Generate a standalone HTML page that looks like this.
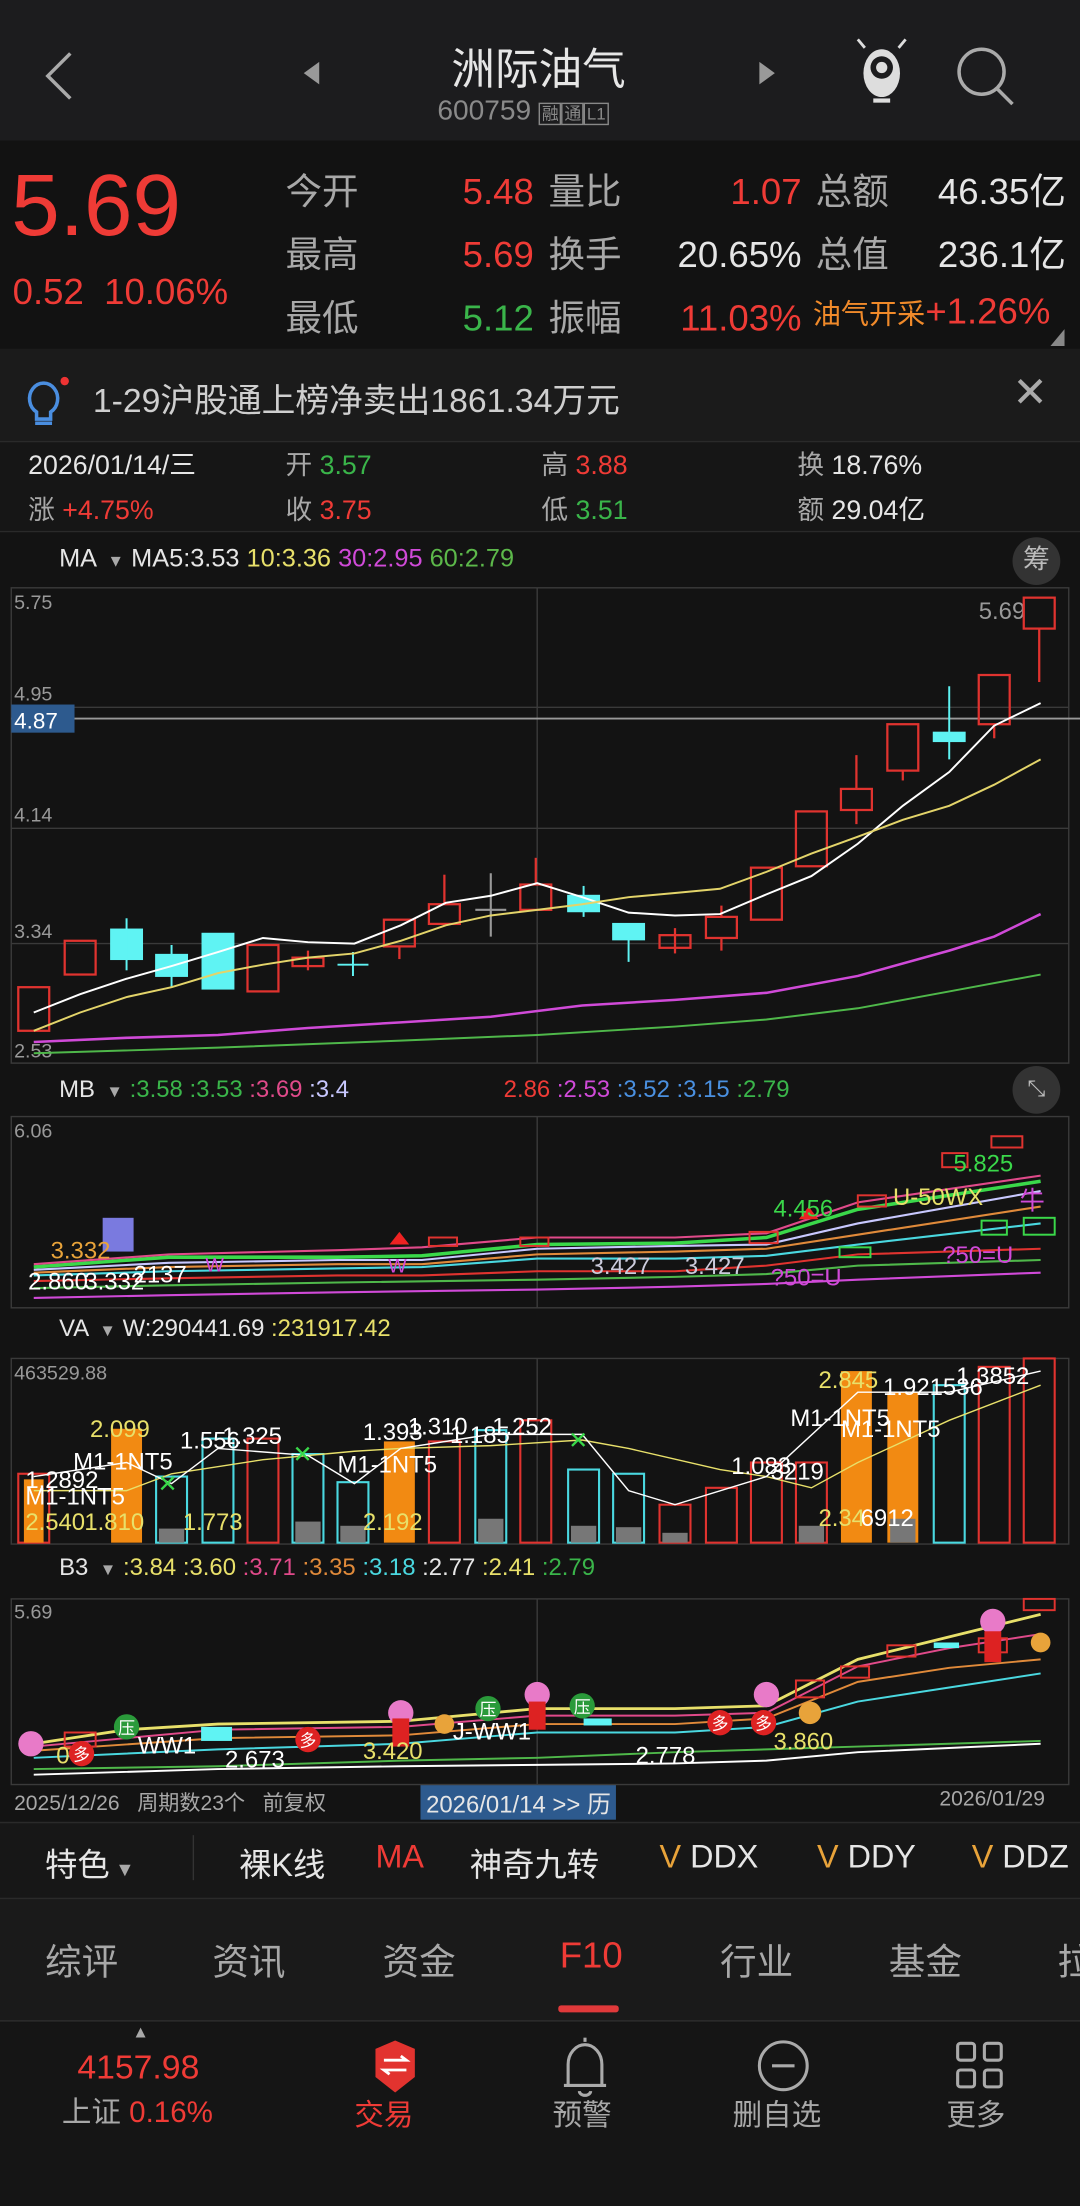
<!DOCTYPE html>
<html><head><meta charset="utf-8"><style>
*{margin:0;padding:0;box-sizing:border-box}
html,body{width:1080px;height:2206px;overflow:hidden;background:#121212}
#w{position:absolute;left:0;top:0;width:768px;height:1569px;transform:scale(1.40625);transform-origin:0 0;background:#131313;font-family:"Liberation Sans","Noto Sans CJK SC",sans-serif;color:#ddd}
.a{position:absolute;white-space:nowrap}
.r{color:#ef3b36}.g{color:#3ab54a}.w{color:#e6e6e6}.gr{color:#a8a8a8}
.v{color:#e8a33a}
svg{position:absolute;left:0;top:0}
</style></head><body><div id="w">
<div class="a" style="left:0;top:0;width:768px;height:100px;background:#1c1c1e"></div>
<div class="a" style="left:0;top:100px;width:768px;height:148px;background:#121212"></div>
<div class="a" style="left:0;top:248px;width:768px;height:66px;background:#1b1b1b"></div>
<div class="a" style="left:0;top:314px;width:768px;height:64px;background:#161616"></div>
<div class="a" style="left:0;top:1350px;width:768px;height:88px;background:#1a1a1a"></div>
<div class="a" style="left:0;top:1296px;width:768px;height:54px;background:#171717"></div>
<div class="a" style="left:0;top:1438px;width:768px;height:131px;background:#151515"></div>

<div class="a w" style="left:321px;top:24px;font-size:31px">洲际油气</div>
<div class="a" style="left:311px;top:68px;font-size:20px;color:#8a8a8a">600759 <span style="font-size:12px;border:1px solid #888;padding:0 1px">融</span><span style="font-size:12px;border:1px solid #888;padding:0 1px">通</span><span style="font-size:12px;border:1px solid #888;padding:0 1px">L1</span></div>

<div class="a r" style="left:8px;top:112px;font-size:62px;line-height:70px">5.69</div>
<div class="a r" style="left:9px;top:192px;font-size:26px">0.52&nbsp; 10.06%</div>
<div class="a gr" style="left:203px;top:114px;font-size:26px;line-height:45px">今开<br>最高<br>最低</div>
<div class="a" style="left:329px;top:114px;font-size:26px;line-height:45px"><span class="r">5.48</span><br><span class="r">5.69</span><br><span class="g">5.12</span></div>
<div class="a gr" style="left:390px;top:114px;font-size:26px;line-height:45px">量比<br>换手<br>振幅</div>
<div class="a" style="left:470px;top:114px;width:100px;text-align:right;font-size:26px;line-height:45px"><span class="r">1.07</span><br><span class="w">20.65%</span><br><span class="r">11.03%</span></div>
<div class="a gr" style="left:580px;top:114px;font-size:26px;line-height:45px">总额<br>总值</div>
<div class="a w" style="left:640px;top:114px;width:118px;text-align:right;font-size:26px;line-height:45px">46.35亿<br>236.1亿</div>
<div class="a" style="left:578px;top:206px;font-size:20px;color:#f08a2a">油气开采<span class="r" style="font-size:26px">+1.26%</span></div>

<div class="a" style="left:66px;top:265px;font-size:24px;color:#cfcfcf">1-29沪股通上榜净卖出1861.34万元</div>
<div class="a" style="left:720px;top:262px;font-size:30px;color:#aaa">✕</div>

<div class="a" style="left:20px;top:316px;font-size:19px;line-height:32px"><span class="w">2026/01/14/三</span><br><span class="gr">涨 </span><span class="r">+4.75%</span></div>
<div class="a" style="left:203px;top:316px;font-size:19px;line-height:32px"><span class="gr">开 </span><span class="g">3.57</span><br><span class="gr">收 </span><span class="r">3.75</span></div>
<div class="a" style="left:385px;top:316px;font-size:19px;line-height:32px"><span class="gr">高 </span><span class="r">3.88</span><br><span class="gr">低 </span><span class="g">3.51</span></div>
<div class="a" style="left:567px;top:316px;font-size:19px;line-height:32px"><span class="gr">换 </span><span class="w">18.76%</span><br><span class="gr">额 </span><span class="w">29.04亿</span></div>

<div class="a" style="left:42px;top:387px;font-size:18px"><span class="w">MA</span> <span class="gr" style="font-size:12px">&nbsp;▼</span> <span class="w">MA5:3.53</span> <span style="color:#e8e06a">10:3.36</span> <span style="color:#d04ad8">30:2.95</span> <span style="color:#5cb84a">60:2.79</span></div>
<div class="a" style="left:720px;top:382px;width:34px;height:34px;border-radius:17px;background:#333;color:#bbb;font-size:19px;text-align:center;line-height:34px">筹</div>

<div class="a" style="left:42px;top:765px;font-size:17px"><span class="w">MB</span> <span class="gr" style="font-size:12px">&nbsp;▼</span> <span class="g">:3.58 :3.53</span> <span style="color:#e04a8a">:3.69</span> <span style="color:#c8c8ff">:3.4</span><span style="display:inline-block;width:110px"></span><span class="r">2.86</span> <span style="color:#d04ad8">:2.53</span> <span style="color:#4a90e0">:3.52 :3.15</span> <span class="g">:2.79</span></div>
<div class="a" style="left:720px;top:758px;width:34px;height:34px;border-radius:17px;background:#333;color:#bbb;font-size:16px;text-align:center;line-height:34px">⤡</div>

<div class="a" style="left:42px;top:935px;font-size:17px"><span class="w">VA</span> <span class="gr" style="font-size:12px">&nbsp;▼</span> <span class="w">W:290441.69</span> <span style="color:#e8e06a">:231917.42</span></div>
<div class="a" style="left:42px;top:1105px;font-size:17px"><span class="w">B3</span> <span class="gr" style="font-size:12px">&nbsp;▼</span> <span style="color:#e8e06a">:3.84 :3.60</span> <span style="color:#e04a8a">:3.71</span> <span style="color:#e08a3a">:3.35</span> <span style="color:#4ad8e0">:3.18</span> <span class="w">:2.77</span> <span style="color:#e8e06a">:2.41</span> <span class="g">:2.79</span></div>

<div class="a gr" style="left:10px;top:1271px;font-size:15px">2025/12/26 &nbsp; 周期数23个 &nbsp; 前复权</div>
<div class="a w" style="left:299px;top:1269px;font-size:17px;background:#2d5a8e;padding:0 4px">2026/01/14 &gt;&gt; 历</div>
<div class="a gr" style="left:668px;top:1271px;font-size:15px">2026/01/29</div>

<div class="a w" style="left:32px;top:1307px;font-size:23px">特色<span class="gr" style="font-size:14px"> ▼</span></div>
<div class="a" style="left:137px;top:1305px;width:1px;height:32px;background:#333"></div>
<div class="a w" style="left:170px;top:1307px;font-size:23px">裸K线</div>
<div class="a r" style="left:267px;top:1307px;font-size:23px">MA</div>
<div class="a w" style="left:334px;top:1307px;font-size:23px">神奇九转</div>
<div class="a w" style="left:469px;top:1307px;font-size:23px"><span class="v">V</span> DDX</div>
<div class="a w" style="left:581px;top:1307px;font-size:23px"><span class="v">V</span> DDY</div>
<div class="a w" style="left:691px;top:1307px;font-size:23px"><span class="v">V</span> DDZ</div>

<div class="a gr" style="left:32px;top:1375px;font-size:26px">综评</div>
<div class="a gr" style="left:151px;top:1375px;font-size:26px">资讯</div>
<div class="a gr" style="left:272px;top:1375px;font-size:26px">资金</div>
<div class="a r" style="left:398px;top:1375px;font-size:26px">F10</div>
<div class="a gr" style="left:512px;top:1375px;font-size:26px">行业</div>
<div class="a gr" style="left:632px;top:1375px;font-size:26px">基金</div>
<div class="a gr" style="left:752px;top:1375px;font-size:26px">拉</div>
<div class="a" style="left:397px;top:1426px;width:43px;height:5px;background:#e0393a;border-radius:2px"></div>

<div class="a gr" style="left:94px;top:1438px;font-size:12px">▲</div>
<div class="a r" style="left:55px;top:1457px;font-size:24px">4157.98</div>
<div class="a" style="left:44px;top:1486px;font-size:21px"><span class="gr">上证 </span><span class="r">0.16%</span></div>
<div class="a r" style="left:252px;top:1488px;font-size:21px">交易</div>
<div class="a gr" style="left:393px;top:1488px;font-size:21px">预警</div>
<div class="a gr" style="left:521px;top:1488px;font-size:21px">删自选</div>
<div class="a gr" style="left:673px;top:1488px;font-size:21px">更多</div>

<svg width="768" height="1569" viewBox="0 0 768 1569">
<g fill="none" stroke="#aaa" stroke-width="2.5">
<path d="M50 38 L34 54 L50 70"/>
<circle cx="698" cy="51" r="16"/><path d="M709 63 L720 74"/>
</g>
<ellipse cx="627" cy="52" rx="13" ry="17" fill="#ddd"/>
<circle cx="627" cy="48" r="8" fill="#1c1c1e"/><circle cx="627" cy="48" r="4" fill="#ddd"/>
<path d="M615 34 l-5 -6 M639 34 l5 -6" stroke="#ddd" stroke-width="2"/>
<rect x="621" y="70" width="12" height="3" fill="#ddd"/>
<path d="M227 44 L216 52 L227 60Z M540 44 L551 52 L540 60Z" fill="#999"/>
<g fill="none" stroke="#4a8ee0" stroke-width="2.5"><path d="M26 293 a10 11 0 1 1 10 0 l0 5 h-10z"/><path d="M25 301 h12"/></g>
<circle cx="46" cy="271" r="3" fill="#e33"/>
<path d="M757 234 L757 246 L747 246Z" fill="#888"/>
<path d="M0 314 H768 M0 378 H768" stroke="#2a2a2a"/>
<g stroke="#3a3a3a" fill="none" stroke-width="1">
<rect x="8" y="418" width="752" height="338"/>
<path d="M8 589 H760 M8 671 H760 M8 503 H760"/>
<rect x="8" y="794" width="752" height="136"/>
<rect x="8" y="966" width="752" height="132"/>
<rect x="8" y="1137" width="752" height="132"/>
<path d="M382 418 V756 M382 794 V930 M382 966 V1098 M382 1137 V1269"/>
</g>
<path d="M8 511 H768" stroke="#999" stroke-width="1.3"/>
<rect x="8" y="501" width="45" height="20" fill="#2d5a8e"/>
<text x="10" y="518" fill="#fff" font-size="16" font-family="Liberation Sans">4.87</text>
<g fill="#999" font-size="14" font-family="Liberation Sans">
<text x="10" y="433">5.75</text><text x="10" y="498">4.95</text><text x="10" y="584">4.14</text><text x="10" y="667">3.34</text><text x="10" y="752">2.53</text>
<text x="696" y="440" font-size="17">5.69</text>
<text x="10" y="809">6.06</text><text x="10" y="981">463529.88</text><text x="10" y="1151">5.69</text>
</g>
<g stroke="#e0332f" fill="none" stroke-width="1.6">
<rect x="13" y="702" width="22" height="31"/>
<rect x="46" y="669" width="22" height="24"/>
<rect x="176" y="672" width="22" height="33"/>
<rect x="208" y="681" width="22" height="6"/><path d="M219 676 V690"/>
<rect x="273" y="654" width="22" height="19"/><path d="M284 673 V682"/>
<rect x="305" y="643" width="22" height="14"/><path d="M316 622 V643"/>
<rect x="370" y="629" width="22" height="18"/><path d="M381 610 V629"/>
<rect x="469" y="665" width="22" height="9"/><path d="M480 660 V678"/>
<rect x="502" y="652" width="22" height="15"/><path d="M513 644 V652 M513 667 V676"/>
<rect x="534" y="617" width="22" height="37"/>
<rect x="566" y="577" width="22" height="39"/>
<rect x="598" y="561" width="22" height="15"/><path d="M609 537 V561 M609 576 V586"/>
<rect x="631" y="515" width="22" height="33"/><path d="M642 548 V555"/>
<rect x="696" y="480" width="22" height="35"/><path d="M707 515 V525"/>
<rect x="728" y="425" width="22" height="22"/><path d="M739 447 V485"/>
</g>
<g fill="#5ff3f3" stroke="#5ff3f3" stroke-width="1.4">
<rect x="79" y="661" width="22" height="21"/><path d="M90 653 V690"/>
<rect x="111" y="679" width="22" height="15"/><path d="M122 672 V702"/>
<rect x="144" y="664" width="22" height="39"/>
<rect x="404" y="637" width="22" height="11"/><path d="M415 630 V652"/>
<rect x="436" y="657" width="22" height="11"/><path d="M447 668 V684"/>
<rect x="664" y="521" width="22" height="6"/><path d="M675 488 V540"/>
<path d="M240 686 H262 M251 677 V694"/>
</g>
<path d="M338 647 H360 M349 621 V666" stroke="#999" stroke-width="1.5"/>
<g fill="none" stroke-width="1.4">
<polyline stroke="#fff" points="24,720 57,707 90,696 122,687 155,677 187,667 219,670 252,671 285,658 317,642 349,637 382,628 414,638 447,649 480,651 512,650 545,636 577,623 610,600 642,573 675,549 707,516 740,500"/>
<polyline stroke="#e3d46a" points="24,738 57,725 90,714 122,707 155,697 187,691 219,686 252,683 285,674 317,663 349,656 382,652 414,648 447,643 480,640 512,637 545,625 577,612 610,600 642,588 675,578 707,563 740,545" transform="translate(0,-5)"/>
<polyline stroke="#d04ad8" stroke-width="1.8" points="24,741 90,738 155,736 219,731 285,727 349,723 414,715 480,711 545,706 610,694 675,676 707,666 740,650"/>
<polyline stroke="#4fb84a" points="24,749 155,745 285,740 382,736 480,730 545,725 610,717 675,705 740,693"/>
</g>
<g fill="none" stroke-width="1.5">
<polyline stroke="#d04ad8" points="24,923 120,921 240,919 382,917 480,915 545,913 610,910 740,905"/>
<polyline stroke="#4fb84a" points="24,916 120,914 240,912 382,910 480,908 545,906 610,900 740,896"/>
<polyline stroke="#e0332f" points="24,911 120,909 240,907 300,907 382,904 480,904 545,900 610,892 740,888"/>
<polyline stroke="#4ad8e0" points="24,907 120,904 240,902 300,901 382,895 480,895 545,893 610,885 740,870"/>
<polyline stroke="#e08a3a" points="24,905 120,901 240,899 300,899 382,892 480,890 545,888 610,878 740,858"/>
<polyline stroke="#c8c8ff" points="24,903 120,898 240,896 300,896 382,888 480,886 545,885 610,870 740,847"/>
<polyline stroke="#3ad84a" stroke-width="2.5" points="24,901 120,894 240,894 300,893 382,885 480,884 545,880 610,860 740,840"/>
<polyline stroke="#e04a8a" points="24,899 120,892 240,889 300,887 382,880 480,880 545,877 610,855 740,836"/>
</g>
<g fill="none" stroke="#e0332f" stroke-width="1.4"><rect x="705" y="808" width="22" height="8"/><rect x="670" y="820" width="18" height="10"/><rect x="610" y="850" width="20" height="8"/><rect x="533" y="876" width="20" height="8"/><rect x="370" y="880" width="20" height="6"/><rect x="305" y="880" width="20" height="6"/></g>
<g fill="none" stroke="#3ad84a" stroke-width="1.4"><rect x="728" y="866" width="22" height="12"/><rect x="698" y="868" width="18" height="10"/><rect x="597" y="887" width="22" height="7"/></g>
<rect x="73" y="866" width="22" height="24" fill="#7a7adf"/>
<path d="M284 876 l-7 9 h14z M575 858 l-7 9 h14z" fill="#e22"/>
<g font-family="Liberation Sans" font-size="17">
<text x="36" y="895" fill="#e8a33a">3.332</text><text x="20" y="917" fill="#fff">2.860</text><text x="60" y="917" fill="#fff">3.332</text><text x="95" y="912" fill="#fff">2137</text>
<text x="420" y="906" fill="#ccd">3.427</text><text x="487" y="906" fill="#ccd">3.427</text>
<text x="550" y="865" fill="#3ad84a">4.456</text><text x="678" y="833" fill="#3ad84a">5.825</text>
<text x="635" y="857" fill="#e8e06a">U-50WX</text><text x="548" y="914" fill="#d04ad8">?50=U</text><text x="670" y="898" fill="#d04ad8">?50=U</text>
<text x="146" y="904" fill="#d04ad8" font-size="14">W</text><text x="276" y="905" fill="#d04ad8" font-size="14">W</text><text x="725" y="860" fill="#d04ad8" font-size="18">牛</text>
</g>
<g stroke-width="1.5">
<g fill="none" stroke="#e0332f">
<rect x="13" y="1048" width="22" height="49"/><rect x="176" y="1023" width="22" height="74"/><rect x="305" y="1025" width="22" height="72"/><rect x="370" y="1010" width="22" height="87"/>
<rect x="469" y="1070" width="22" height="27"/><rect x="502" y="1058" width="22" height="39"/><rect x="534" y="1040" width="22" height="57"/><rect x="566" y="1040" width="22" height="57"/><rect x="696" y="972" width="22" height="125"/><rect x="728" y="966" width="22" height="131"/>
</g>
<g fill="#f28a12"><rect x="17" y="1052" width="14" height="45"/><rect x="79" y="1016" width="22" height="81"/><rect x="273" y="1025" width="22" height="72"/><rect x="598" y="975" width="22" height="122"/><rect x="631" y="990" width="22" height="107"/></g>
<g fill="none" stroke="#4ad8e0"><rect x="111" y="1050" width="22" height="47"/><rect x="144" y="1023" width="22" height="74"/><rect x="208" y="1034" width="22" height="63"/><rect x="240" y="1054" width="22" height="43"/><rect x="338" y="1017" width="22" height="80"/><rect x="404" y="1045" width="22" height="52"/><rect x="436" y="1048" width="22" height="49"/><rect x="664" y="985" width="22" height="112"/></g>
<g fill="#777"><rect x="113" y="1087" width="18" height="10"/><rect x="210" y="1082" width="18" height="15"/><rect x="242" y="1085" width="18" height="12"/><rect x="340" y="1080" width="18" height="17"/><rect x="406" y="1085" width="18" height="12"/><rect x="438" y="1086" width="18" height="11"/><rect x="471" y="1090" width="18" height="7"/><rect x="568" y="1085" width="18" height="12"/><rect x="633" y="1080" width="18" height="17"/></g>
<polyline fill="none" stroke="#e8e06a" stroke-width="1" points="24,1060 90,1060 122,1048 187,1038 252,1032 285,1030 349,1028 414,1024 447,1030 512,1045 545,1050 577,1058 610,1040 675,1010 740,985"/>
<polyline fill="none" stroke="#fff" stroke-width="1" points="24,1050 90,1040 122,1055 155,1030 219,1035 252,1055 285,1030 349,1020 414,1020 447,1060 480,1070 545,1050 610,990 675,990 740,975"/>
</g>
<g font-family="Liberation Sans" font-size="17">
<text x="64" y="1022" fill="#e8e06a">2.099</text><text x="52" y="1045" fill="#fff">M1-1NT5</text><text x="18" y="1058" fill="#fff">1.2892</text><text x="18" y="1070" fill="#fff">M1-1NT5</text>
<text x="18" y="1088" fill="#e8e06a">2.540</text><text x="60" y="1088" fill="#e8e06a">1.810</text><text x="130" y="1088" fill="#e8e06a">1.773</text>
<text x="128" y="1030" fill="#fff">1.556</text><text x="158" y="1027" fill="#fff">1.325</text><text x="240" y="1047" fill="#fff">M1-1NT5</text>
<text x="258" y="1024" fill="#fff">1.393</text><text x="290" y="1020" fill="#fff">1.310</text><text x="320" y="1026" fill="#fff">1.185</text><text x="350" y="1020" fill="#fff">1.252</text>
<text x="258" y="1088" fill="#e8e06a">2.192</text><text x="520" y="1048" fill="#fff">1.083</text><text x="548" y="1052" fill="#fff">3219</text>
<text x="562" y="1014" fill="#fff">M1-1NT5</text><text x="598" y="1022" fill="#fff">M1-1NT5</text><text x="582" y="987" fill="#e8e06a">2.845</text><text x="628" y="992" fill="#fff">1.921536</text><text x="680" y="984" fill="#fff">1.3852</text>
<text x="582" y="1085" fill="#e8e06a">2.34</text><text x="612" y="1085" fill="#fff">6912</text>
<text x="112" y="1061" fill="#3ad84a">✕</text><text x="208" y="1040" fill="#3ad84a">✕</text><text x="404" y="1030" fill="#3ad84a">✕</text>
</g>
<g fill="none" stroke-width="1.4">
<polyline stroke="#4fb84a" points="24,1258 155,1256 285,1252 382,1250 480,1246 545,1244 610,1242 740,1238"/>
<polyline stroke="#fff" points="24,1262 155,1258 285,1256 382,1255 480,1254 545,1252 610,1246 740,1240"/>
<polyline stroke="#4ad8e0" points="24,1250 155,1244 285,1240 382,1232 480,1232 545,1228 610,1210 675,1200 740,1190"/>
<polyline stroke="#e08a3a" points="24,1245 155,1236 285,1234 382,1226 480,1226 545,1222 610,1196 675,1186 740,1180"/>
<polyline stroke="#e04a8a" points="24,1242 155,1230 285,1228 382,1220 480,1220 545,1218 610,1185 675,1172 740,1162"/>
<polyline stroke="#e8e06a" stroke-width="2" points="24,1240 90,1230 155,1226 285,1224 382,1215 480,1215 545,1213 610,1180 675,1164 740,1148"/>
</g>
<g fill="none" stroke="#e0332f" stroke-width="1.4"><rect x="728" y="1137" width="22" height="8"/><rect x="696" y="1165" width="20" height="10"/><rect x="631" y="1170" width="20" height="8"/><rect x="566" y="1195" width="20" height="12"/><rect x="598" y="1185" width="20" height="8"/><rect x="46" y="1232" width="22" height="10"/></g>
<g fill="#5ff3f3"><rect x="143" y="1228" width="22" height="10"/><rect x="415" y="1222" width="20" height="5"/><rect x="664" y="1168" width="18" height="4"/></g>
<g font-size="12" font-family="Liberation Sans,Noto Sans CJK SC" text-anchor="middle">
<circle cx="90" cy="1228" r="9" fill="#2a9a3a"/><text x="90" y="1233" fill="#fff">压</text>
<circle cx="347" cy="1215" r="9" fill="#2a9a3a"/><text x="347" y="1220" fill="#fff">压</text>
<circle cx="414" cy="1213" r="9" fill="#2a9a3a"/><text x="414" y="1218" fill="#fff">压</text>
<circle cx="58" cy="1247" r="9" fill="#d22"/><text x="58" y="1252" fill="#fff">多</text>
<circle cx="219" cy="1237" r="9" fill="#d22"/><text x="219" y="1242" fill="#fff">多</text>
<circle cx="512" cy="1225" r="9" fill="#d22"/><text x="512" y="1230" fill="#fff">多</text>
<circle cx="543" cy="1225" r="9" fill="#d22"/><text x="543" y="1230" fill="#fff">多</text>
<circle cx="22" cy="1240" r="9" fill="#e87ac8"/><circle cx="285" cy="1218" r="9" fill="#e87ac8"/><circle cx="382" cy="1205" r="9" fill="#e87ac8"/><circle cx="545" cy="1205" r="9" fill="#e87ac8"/><circle cx="706" cy="1153" r="9" fill="#e87ac8"/>
<rect x="700" y="1160" width="12" height="22" fill="#d22"/><rect x="279" y="1222" width="12" height="20" fill="#d22"/><rect x="376" y="1210" width="12" height="20" fill="#d22"/>
<circle cx="576" cy="1218" r="8" fill="#e8a33a"/><circle cx="740" cy="1168" r="7" fill="#e8a33a"/><circle cx="316" cy="1226" r="7" fill="#e8a33a"/>
</g>
<g font-family="Liberation Sans" font-size="17">
<text x="40" y="1254" fill="#e8e06a">0</text><text x="98" y="1247" fill="#fff">WW1</text><text x="160" y="1257" fill="#fff">2.673</text><text x="258" y="1251" fill="#e8e06a">3.420</text>
<text x="322" y="1237" fill="#fff">J-WW1</text><text x="452" y="1254" fill="#fff">2.778</text><text x="550" y="1244" fill="#e8e06a">3.860</text>
</g>
<path d="M0 1296 H768 M0 1350 H768" stroke="#2a2a2a"/>
<path d="M0 1437 H768" stroke="#2c2c2c"/>
<path d="M267 1457 l14 -6 l14 6 v20 l-14 11 l-14 -11z" fill="#e2332f"/>
<path d="M273 1465 h16 l-4 -3 M289 1472 h-16 l4 3" stroke="#fff" stroke-width="2" fill="none"/>
<g fill="none" stroke="#aaa" stroke-width="2.2">
<path d="M404 1483 v-15 a12 14 0 0 1 24 0 v15 h-27 h30"/><path d="M412 1487 a4 3 0 0 0 8 0"/><path d="M416 1452 v-3"/>
<circle cx="557" cy="1469" r="17"/><path d="M549 1469 h16"/>
<rect x="681" y="1453" width="12" height="12" rx="2"/><rect x="700" y="1453" width="12" height="12" rx="2"/><rect x="681" y="1472" width="12" height="12" rx="2"/><rect x="700" y="1472" width="12" height="12" rx="2"/>
</g>
</svg>
</div></body></html>
